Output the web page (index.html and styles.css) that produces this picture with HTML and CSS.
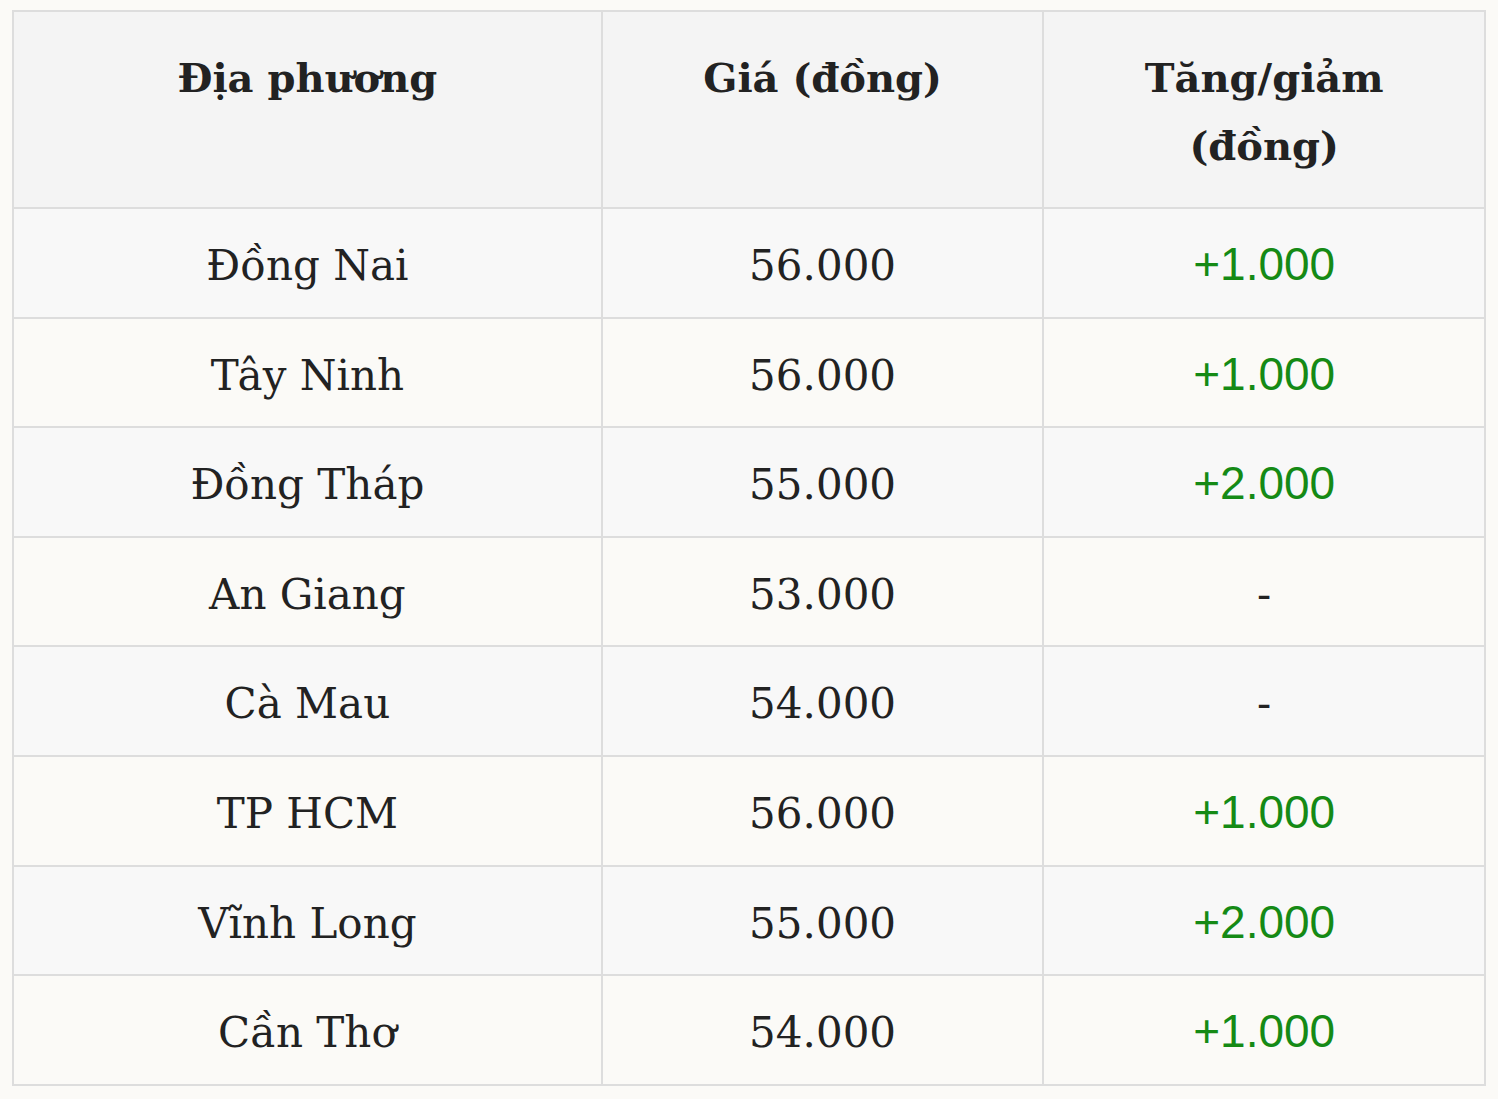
FILE: index.html
```html
<!DOCTYPE html>
<html lang="vi">
<head>
<meta charset="utf-8">
<title>Giá</title>
<link rel="stylesheet" href="styles.css">
</head>
<body>
<table class="price-table">
  <colgroup>
    <col class="col-place">
    <col class="col-price">
    <col class="col-change">
  </colgroup>
  <thead>
    <tr>
      <th>Địa phương</th>
      <th>Giá (đồng)</th>
      <th>Tăng/giảm<br>(đồng)</th>
    </tr>
  </thead>
  <tbody>
    <tr><td>Đồng Nai</td><td>56.000</td><td><span class="up">+1.000</span></td></tr>
    <tr><td>Tây Ninh</td><td>56.000</td><td><span class="up">+1.000</span></td></tr>
    <tr><td>Đồng Tháp</td><td>55.000</td><td><span class="up">+2.000</span></td></tr>
    <tr><td>An Giang</td><td>53.000</td><td>-</td></tr>
    <tr><td>Cà Mau</td><td>54.000</td><td>-</td></tr>
    <tr><td>TP HCM</td><td>56.000</td><td><span class="up">+1.000</span></td></tr>
    <tr><td>Vĩnh Long</td><td>55.000</td><td><span class="up">+2.000</span></td></tr>
    <tr><td>Cần Thơ</td><td>54.000</td><td><span class="up">+1.000</span></td></tr>
  </tbody>
</table>
</body>
</html>
```
FILE: styles.css
```css
html, body {
  background: #fbfaf7;
}
body {
  margin: 10px 12px;
  font-family: "DejaVu Serif", "Liberation Serif", serif;
  color: #222222;
}
.price-table {
  width: 100%;
  border-collapse: collapse;
  table-layout: fixed;
  border: 2px solid #dddddd;
}
.col-place { width: 40%; }
.col-price { width: 30%; }
.col-change { width: 30%; }
.price-table th,
.price-table td {
  border: 2px solid #dddddd;
  text-align: center;
}
.price-table th {
  background: #f4f4f4;
  font-weight: bold;
  font-size: 40px;
  line-height: 68px;
  padding: 31.5px 10px 27.5px;
  vertical-align: top;
}
.price-table td {
  font-size: 42px;
  line-height: 68px;
  padding: 23px 10px 16.6px;
  vertical-align: middle;
}
.price-table tbody tr:nth-child(odd) td {
  background: #f8f8f8;
}
.price-table tbody tr:nth-child(even) td {
  background: #fbfaf7;
}
.up {
  color: #158a15;
  font-family: "Liberation Sans", Arial, sans-serif;
  font-size: 46px;
  line-height: 1;
}
```
